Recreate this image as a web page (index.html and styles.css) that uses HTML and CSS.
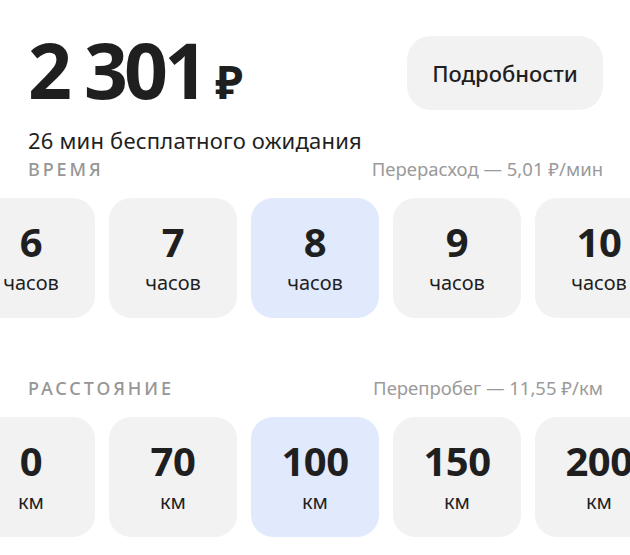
FILE: index.html
```html
<!DOCTYPE html>
<html lang="ru">
<head>
<meta charset="utf-8">
<title>Тариф</title>
<link rel="stylesheet" href="styles.css">
</head>
<body>
<main class="page">
  <header class="header">
    <div class="price">2 301<span class="rub">₽</span></div>
    <button class="details">Подробности</button>
  </header>
  <p class="subtitle">26 мин бесплатного ожидания</p>

  <section class="group">
    <div class="group-head">
      <span class="group-title">Время</span>
      <span class="group-note">Перерасход — 5,01 ₽/мин</span>
    </div>
    <div class="track-wrap">
      <div class="track">
        <div class="opt"><span class="num">6</span><span class="unit">часов</span></div>
        <div class="opt"><span class="num">7</span><span class="unit">часов</span></div>
        <div class="opt opt-active"><span class="num">8</span><span class="unit">часов</span></div>
        <div class="opt"><span class="num">9</span><span class="unit">часов</span></div>
        <div class="opt"><span class="num">10</span><span class="unit">часов</span></div>
      </div>
    </div>
  </section>

  <section class="group group-second">
    <div class="group-head">
      <span class="group-title">Расстояние</span>
      <span class="group-note">Перепробег — 11,55 ₽/км</span>
    </div>
    <div class="track-wrap">
      <div class="track">
        <div class="opt"><span class="num">0</span><span class="unit">км</span></div>
        <div class="opt"><span class="num">70</span><span class="unit">км</span></div>
        <div class="opt opt-active"><span class="num">100</span><span class="unit">км</span></div>
        <div class="opt"><span class="num">150</span><span class="unit">км</span></div>
        <div class="opt"><span class="num">200</span><span class="unit">км</span></div>
      </div>
    </div>
  </section>
</main>
</body>
</html>
```

FILE: styles.css
```css
html, body {
  margin: 0;
  padding: 0;
  background: #ffffff;
}

body {
  font-family: "Noto Sans", "Open Sans", "DejaVu Sans", sans-serif;
  color: #1f1f1f;
  overflow: hidden;
}

.page {
  width: 630px;
  box-sizing: border-box;
  padding: 36px 27px 0 28px;
}

.header {
  display: flex;
  justify-content: space-between;
  align-items: center;
  height: 74px;
}

.price {
  font-size: 77px;
  font-weight: 700;
  line-height: 74px;
  letter-spacing: -4px;
  margin-top: 5px;
  white-space: nowrap;
}

.rub {
  font-size: 46px;
  letter-spacing: 0;
  margin-left: 11px;
}

.details {
  width: 196px;
  height: 74px;
  border: none;
  border-radius: 24px;
  background: #f2f2f2;
  font-family: inherit;
  font-size: 22px;
  font-weight: 500;
  color: #1f1f1f;
  padding: 0;
  cursor: pointer;
}

.subtitle {
  margin: 17px 0 0;
  font-size: 22px;
  line-height: 26px;
  letter-spacing: 0.2px;
}

.group {
  margin-top: 4px;
}

.group-second {
  margin-top: 58px;
}

.group-head {
  display: flex;
  justify-content: space-between;
  align-items: baseline;
  height: 24px;
  line-height: 24px;
}

.group-title {
  font-size: 18px;
  font-weight: 500;
  letter-spacing: 2.9px;
  text-transform: uppercase;
  color: #969696;
}

.group-note {
  font-size: 18.5px;
  color: #9a9a9a;
}

.track-wrap {
  margin: 17px -27px 0 -28px;
  overflow: hidden;
}

.track {
  display: flex;
  gap: 14px;
  margin-left: -33px;
}

.opt {
  flex: 0 0 128px;
  height: 120px;
  box-sizing: border-box;
  padding-top: 22px;
  border-radius: 22px;
  background: #f2f2f2;
  display: flex;
  flex-direction: column;
  align-items: center;
}

.opt-active {
  background: #e1e9fc;
}

.num {
  font-size: 40px;
  font-weight: 700;
  line-height: 44px;
  letter-spacing: -0.5px;
}

.unit {
  margin-top: 7px;
  font-size: 20px;
  line-height: 24px;
}
```
